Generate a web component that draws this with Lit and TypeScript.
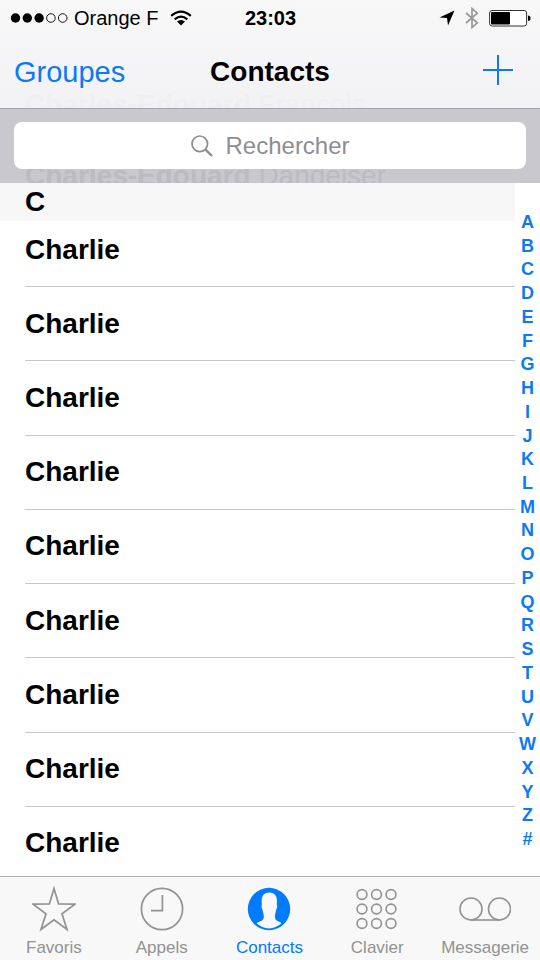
import { LitElement, html, svg, css } from "lit";
import { customElement } from "lit/decorators.js";

const INDEX = [..."ABCDEFGHIJKLMNOPQRSTUVWXYZ#"];
const CONTACTS = Array.from({ length: 9 }, () => "Charlie");

const star = svg`<path d="M22 2.500 26.600 18 43 18.100 30 27.700 35 43.500 22 33.800 9 43.500 14 27.700 1 18.100 17.400 18Z" fill="none" stroke="currentColor" stroke-width="1.7"/>`;
const clock = svg`<circle cx="22" cy="23" r="20.6" fill="none" stroke="currentColor" stroke-width="1.7"/><path d="M22.4 9V24.6H11" fill="none" stroke="currentColor" stroke-width="1.7"/>`;
const person = svg`<circle cx="22" cy="23" r="21.2" fill="currentColor"/><path d="M22.300 6.500C27 6.500 29.900 9.500 29.900 14C30 16.500 29.600 18 30 19.500C30.600 21 29.700 22.500 29 24.500C28.500 27 28 28.500 28 30.500C28 33.500 29 34.500 33 36L34.500 37.200Q29 42.300 22 42.400Q15 42.300 9.500 37.200L11.500 36C15.800 34.500 16.800 33.500 16.800 30.500C16.800 28.500 16.200 27 15.700 24.500C15 22.500 14.100 21 14.700 19.500C15.100 18 14.600 16.500 14.700 14C14.800 9.500 17.600 6.500 22.300 6.500Z" fill="#f8f8f8"/>`;
const keypad = svg`${[8, 22.5, 37].map((y) => [7, 21.5, 36].map((x) => svg`<circle cx=${x} cy=${y + 0.5} r="4.900" fill="none" stroke="currentColor" stroke-width="1.600"/>`))}`;
const voicemail = svg`<g fill="none" stroke="currentColor" stroke-width="1.600"><circle cx="12" cy="23" r="11"/><circle cx="40.500" cy="23" r="11"/><path d="M12 34H40.500"/></g>`;

const TABS = [
  { label: "Favoris", icon: star, width: 44 },
  { label: "Appels", icon: clock, width: 44 },
  { label: "Contacts", icon: person, width: 44, active: true },
  { label: "Clavier", icon: keypad, width: 44 },
  { label: "Messagerie", icon: voicemail, width: 52 },
];

@customElement("app-root")
export class AppRoot extends LitElement {
  static styles = css`
    :host {
      display: flex;
      flex-direction: column;
      min-height: 100vh;
      background: #fff;
      color: #000;
      font-family: "Liberation Sans", Arial, sans-serif;
    }
    * { box-sizing: border-box; }
    svg { display: block; flex: none; }
    button {
      border: 0;
      padding: 0;
      background: none;
      font: inherit;
      color: inherit;
      cursor: pointer;
    }
    .top {
      position: relative;
      overflow: hidden;
      background: linear-gradient(#f8f8f9, #f2f2f4);
      border-bottom: 1px solid #a3a3a8;
    }
    .status, .nav {
      position: relative;
      display: grid;
      grid-template-columns: 1fr auto 1fr;
      align-items: center;
    }
    .status { height: 36px; padding: 0 9px 0 10px; font-size: 20px; }
    .carrier { display: flex; align-items: center; gap: 6px; }
    .carrier .wifi { margin-left: 6px; }
    .time { font-weight: bold; }
    .indicators { display: flex; align-items: center; justify-content: flex-end; gap: 10px; }
    .nav { height: 72px; padding: 0 14px; font-size: 28px; }
    .groups { justify-self: start; font-size: 29px; color: #0c7af5; }
    .title { margin: 0; font-size: 28px; font-weight: bold; }
    .add { justify-self: end; padding: 0 13px 5px 0; color: #0c7af5; }
    .searchbar {
      position: relative;
      padding: 13px 14px 14px;
      background: #c9c8ce;
      overflow: hidden;
    }
    .ghost {
      position: absolute;
      left: 25px;
      bottom: -4px;
      font-size: 28px;
      line-height: 22px;
      color: #bcbbc1;
      white-space: nowrap;
    }
    .ghost.faint { bottom: -8px; color: #efeff1; }
    .search {
      position: relative;
      display: flex;
      align-items: center;
      justify-content: center;
      gap: 13px;
      height: 47px;
      border-radius: 8px;
      background: #fff;
      color: #8e8e93;
    }
    .search input {
      width: 124px;
      border: 0;
      padding: 0;
      outline: 0;
      background: none;
      font: inherit;
      font-size: 24px;
      color: #000;
    }
    .search input::placeholder { color: #8e8e93; opacity: 1; }
    .body { flex: 1; display: grid; grid-template-columns: 1fr 25px; }
    .list { display: flex; flex-direction: column; overflow: hidden; }
    .section, .row { font-size: 28px; font-weight: bold; }
    .section {
      position: relative;
      margin: 0;
      padding-left: 25px;
      background: #f7f7f7;
      line-height: 38px;
    }
    .rows {
      flex: 1;
      display: grid;
      grid-auto-rows: 1fr;
      margin: -8px 0 -5px;
      padding: 0 0 0 25px;
      list-style: none;
    }
    .row {
      display: flex;
      align-items: center;
      border-bottom: 1px solid #c8c7cc;
    }
    .index {
      display: grid;
      grid-auto-rows: 1fr;
      padding: 27px 0 25px;
    }
    .index a {
      display: flex;
      align-items: center;
      justify-content: center;
      color: #0c7af5;
      font-size: 18px;
      line-height: 20px;
      font-weight: bold;
      text-decoration: none;
    }
    .tabs {
      position: relative;
      display: grid;
      grid-template-columns: repeat(5, 1fr);
      height: 84px;
      padding-right: 1px;
      border-top: 1px solid #b2b2b2;
      background: #f8f8f8;
    }
    .tab {
      display: flex;
      flex-direction: column;
      align-items: center;
      gap: 6px;
      padding-top: 9px;
      color: #929292;
      font-size: 17px;
      line-height: 20px;
    }
    .tab.active { color: #007aff; }
  `;

  render() {
    return html`
      <header class="top">
        <span class="ghost faint"><b>Charles-Edouard</b> Francois</span>
        <div class="status">
          <div class="carrier">
            <svg width="58" height="12" viewBox="0 0 58 12" aria-hidden="true">
              ${[0, 1, 2, 3, 4].map((i) => svg`<circle cx=${5.5 + i * 11.8} cy="6" r=${i < 3 ? 4.7 : 4.3} fill=${i < 3 ? "#000" : "none"} stroke=${i < 3 ? "none" : "#000"} stroke-width="0.9"/>`)}
            </svg>
            <span>Orange F</span>
            <svg class="wifi" width="22" height="16" viewBox="0 0 22 16" aria-hidden="true">
              <g fill="none" stroke="#000" stroke-width="2.200"><path d="M1.200 5.800Q11 -2.600 20.800 5.800"/><path d="M4.700 9.300Q11 4 17.300 9.300"/></g>
              <path d="M7 11.600Q11 8.400 15 11.600L11 15.600Z"/>
            </svg>
          </div>
          <span class="time">23:03</span>
          <div class="indicators">
            <svg width="16" height="16" viewBox="0 0 16 16" aria-hidden="true"><path d="M15.500 .5 9 15.500 8 8 .5 7.500Z"/></svg>
            <svg width="14" height="22" viewBox="0 0 14 22" aria-hidden="true"><path d="M1 6 12.300 15.800 7 20.500V1.500L12.300 6.200 1 16" fill="none" stroke="#999" stroke-width="1.700"/></svg>
            <svg width="42" height="18" viewBox="0 0 42 18" aria-hidden="true">
              <rect x=".6" y="1.500" width="37" height="15.500" rx="2.500" fill="#fff" stroke="#333" stroke-width="1"/>
              <rect x="2" y="3" width="19" height="12.500" rx="1"/><path d="M39 6.500Q41.500 6.500 41.500 9.200T39 12Z"/>
            </svg>
          </div>
        </div>
        <nav class="nav">
          <button class="groups">Groupes</button>
          <h1 class="title">Contacts</h1>
          <button class="add" aria-label="Ajouter">
            <svg width="30" height="30" viewBox="0 0 30 30"><path d="M15 0V30M0 15H30" fill="none" stroke="currentColor" stroke-width="2"/></svg>
          </button>
        </nav>
      </header>
      <div class="searchbar">
        <span class="ghost"><b>Charles-Edouard</b> Dandelser</span>
        <label class="search">
          <svg width="22" height="22" viewBox="0 0 22 22" aria-hidden="true"><circle cx="8.800" cy="8.800" r="7.800" fill="none" stroke="currentColor" stroke-width="1.700"/><path d="M14.300 14.300 21 21" stroke="currentColor" stroke-width="2.400"/></svg>
          <input type="text" placeholder="Rechercher" aria-label="Rechercher" />
        </label>
      </div>
      <main class="body">
        <section class="list">
          <h2 class="section" id="C">C</h2>
          <ul class="rows">${CONTACTS.map((name) => html`<li class="row">${name}</li>`)}</ul>
        </section>
        <nav class="index" aria-label="Index">
          ${INDEX.map((l) => html`<a href="#${l}">${l}</a>`)}
        </nav>
      </main>
      <nav class="tabs">
        ${TABS.map((t) => html`
          <button class="tab ${t.active ? "active" : ""}">
            <svg width=${t.width} height="46" viewBox="0 0 ${t.width} 46" aria-hidden="true">${t.icon}</svg>
            <span>${t.label}</span>
          </button>`)}
      </nav>
    `;
  }
}
